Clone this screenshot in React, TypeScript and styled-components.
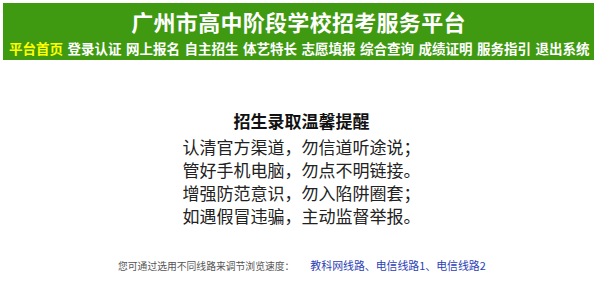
import React from "react";
import styled, { createGlobalStyle } from "styled-components";

const GlobalStyle = createGlobalStyle`
  html, body {
    margin: 0;
    padding: 0;
    background: #fff;
  }
  body {
    font-family: "Noto Sans CJK SC", "Noto Sans", sans-serif;
  }
`;

const Page = styled.div`
  width: 601px;
  height: 290px;
  padding: 3px 7px 0 3px;
  box-sizing: border-box;
`;

const Header = styled.header`
  background: #3f9a12;
  height: 57px;
  display: flex;
  flex-direction: column;
  align-items: center;
`;

const Title = styled.h1`
  margin: 0;
  padding-top: 4px;
  height: 30px;
  line-height: 28px;
  font-size: 22px;
  font-weight: 700;
  color: #fff;
  letter-spacing: 0.3px;
`;

const Nav = styled.nav`
  display: flex;
  gap: 4.5px;
  padding-left: 6px;
  align-self: stretch;
  height: 22px;
  align-items: center;
`;

const NavItem = styled.a<{ $active?: boolean }>`
  font-size: 13.5px;
  line-height: 18px;
  font-weight: 700;
  color: ${(p) => (p.$active ? "#ffff00" : "#fff")};
  text-decoration: none;
  white-space: nowrap;
  flex: none;
`;

const Notice = styled.section`
  display: flex;
  flex-direction: column;
  align-items: center;
  padding-top: 50px;
  padding-left: 6px;
`;

const NoticeTitle = styled.h2`
  margin: 0;
  font-size: 17px;
  height: 22px;
  line-height: 22px;
  font-weight: 700;
  color: #111;
`;

const Lines = styled.div`
  display: flex;
  flex-direction: column;
  margin-top: 3px;
`;

const Line = styled.p`
  margin: 0;
  font-size: 17px;
  height: 23px;
  line-height: 23px;
  color: #222;
  white-space: nowrap;
`;

const Footer = styled.div`
  margin-top: 30px;
  display: flex;
  align-items: baseline;
  padding-left: 115px;
  gap: 16px;
`;

const Hint = styled.span`
  font-size: 9.8px;
  color: #555;
`;

const RouteLinks = styled.span`
  font-size: 10.9px;
  color: #2c3eb5;
`;

const navItems = [
  "平台首页",
  "登录认证",
  "网上报名",
  "自主招生",
  "体艺特长",
  "志愿填报",
  "综合查询",
  "成绩证明",
  "服务指引",
  "退出系统",
];

const lines = [
  "认清官方渠道，勿信道听途说；",
  "管好手机电脑，勿点不明链接。",
  "增强防范意识，勿入陷阱圈套；",
  "如遇假冒违骗，主动监督举报。",
];

export default function App() {
  return (
    <>
      <GlobalStyle />
      <Page>
        <Header>
          <Title>广州市高中阶段学校招考服务平台</Title>
          <Nav>
            {navItems.map((item, i) => (
              <NavItem key={item} $active={i === 0}>
                {item}
              </NavItem>
            ))}
          </Nav>
        </Header>
        <Notice>
          <NoticeTitle>招生录取温馨提醒</NoticeTitle>
          <Lines>
            {lines.map((l) => (
              <Line key={l}>{l}</Line>
            ))}
          </Lines>
        </Notice>
        <Footer>
          <Hint>您可通过选用不同线路来调节浏览速度：</Hint>
          <RouteLinks>教科网线路、电信线路1、电信线路2</RouteLinks>
        </Footer>
      </Page>
    </>
  );
}
